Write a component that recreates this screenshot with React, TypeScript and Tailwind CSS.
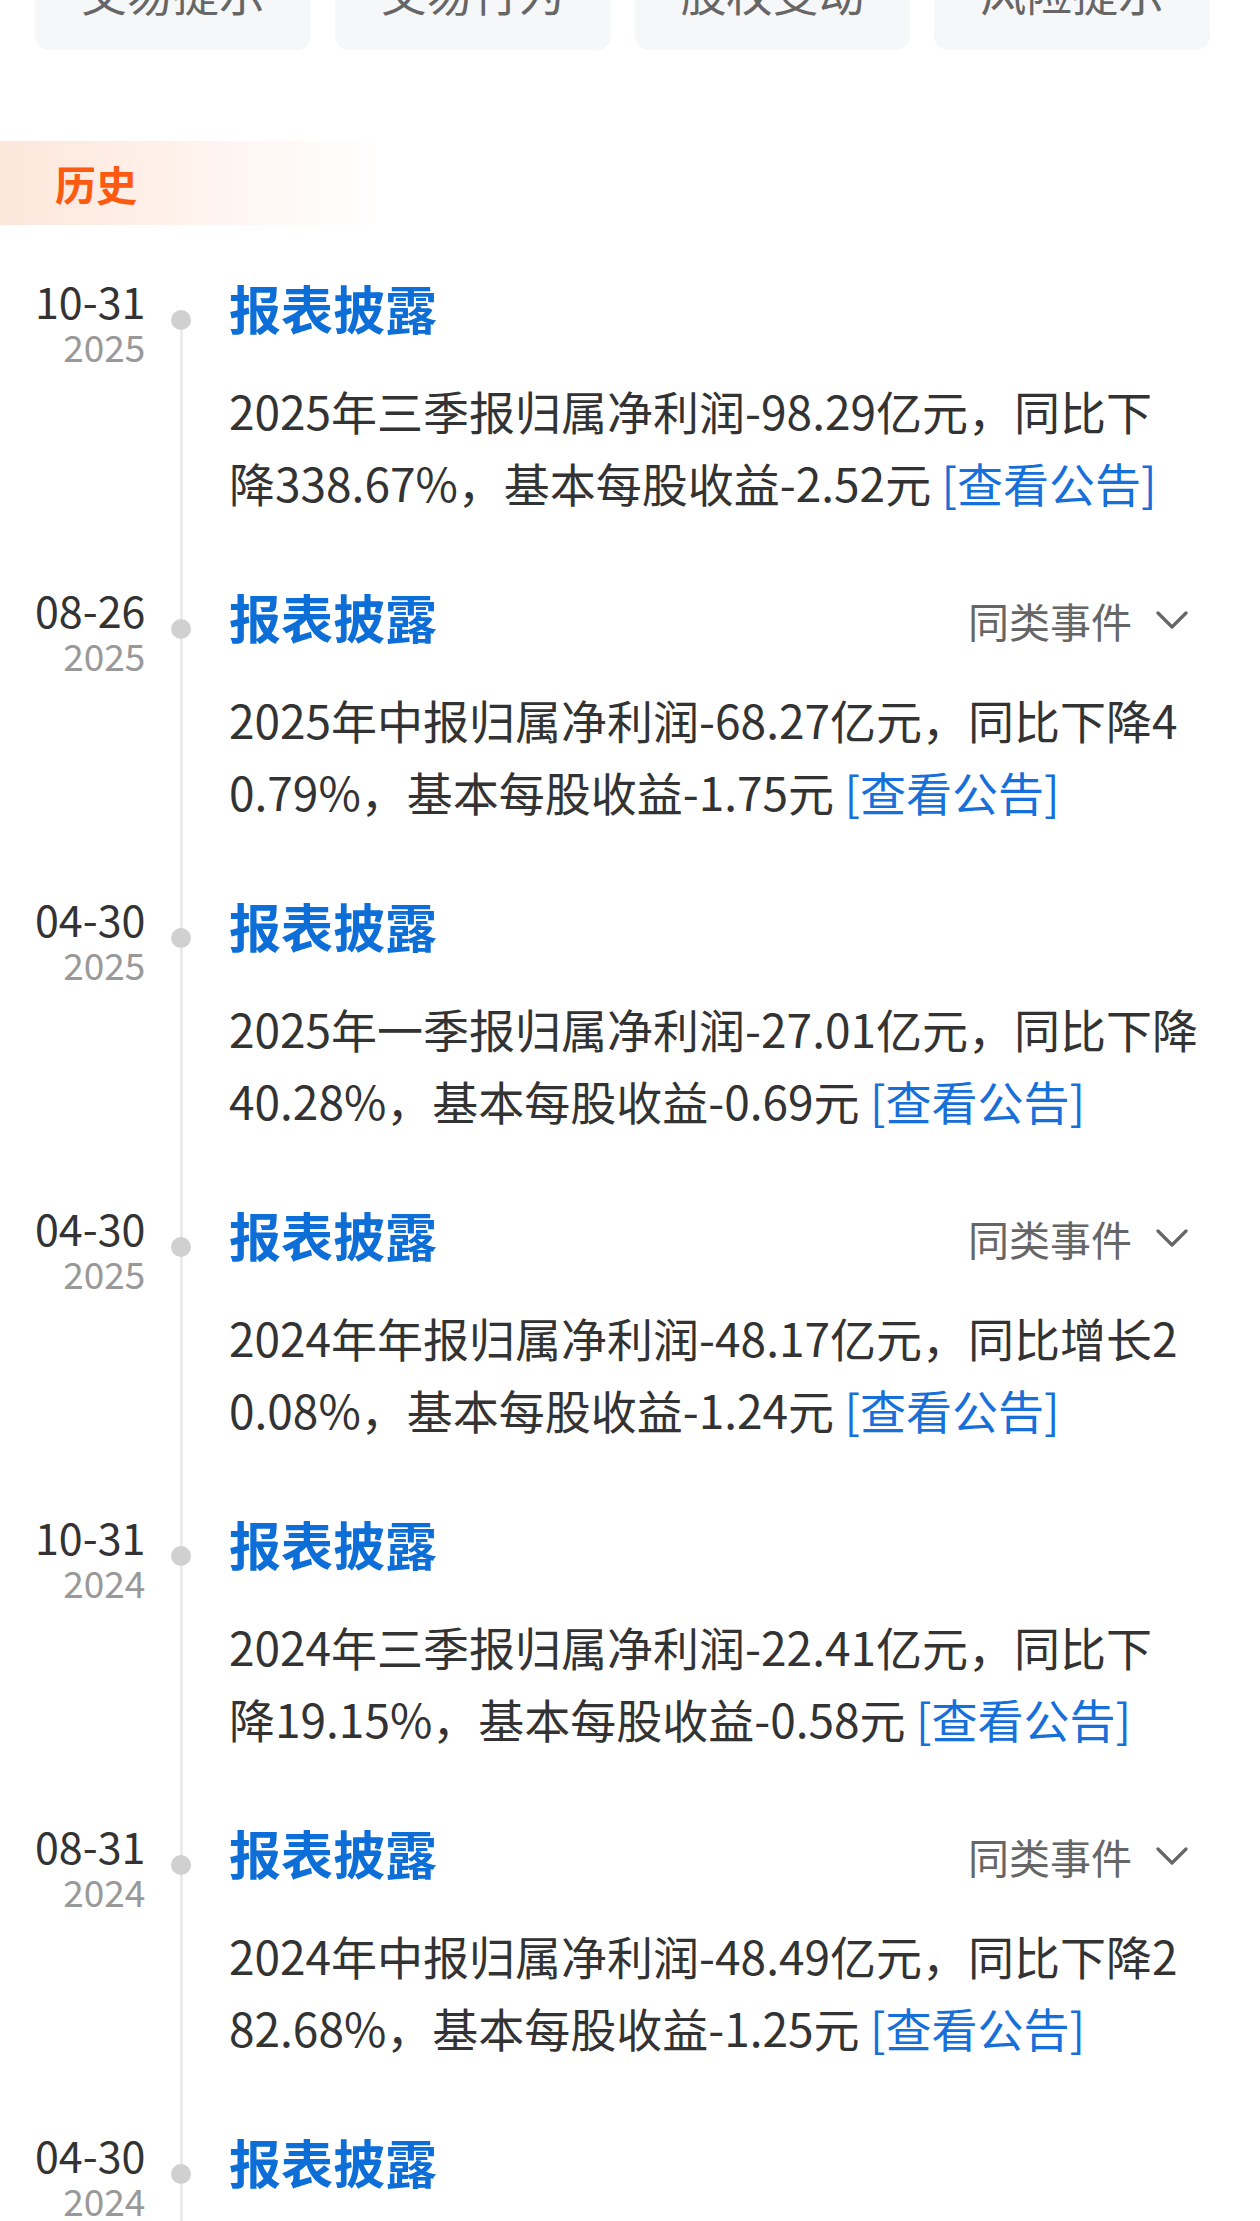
import { Fragment } from "react";

interface EventItem {
  date: string;
  year: string;
  lines: string[];
  similar?: boolean;
}

const tabs = ["交易提示", "交易行为", "股权变动", "风险提示"];

// 每行按原图折行拆开
const events: EventItem[] = [
  {
    date: "10-31",
    year: "2025",
    lines: ["2025年三季报归属净利润-98.29亿元，同比下", "降338.67%，基本每股收益-2.52元"],
  },
  {
    date: "08-26",
    year: "2025",
    similar: true,
    lines: ["2025年中报归属净利润-68.27亿元，同比下降4", "0.79%，基本每股收益-1.75元"],
  },
  {
    date: "04-30",
    year: "2025",
    lines: ["2025年一季报归属净利润-27.01亿元，同比下降", "40.28%，基本每股收益-0.69元"],
  },
  {
    date: "04-30",
    year: "2025",
    similar: true,
    lines: ["2024年年报归属净利润-48.17亿元，同比增长2", "0.08%，基本每股收益-1.24元"],
  },
  {
    date: "10-31",
    year: "2024",
    lines: ["2024年三季报归属净利润-22.41亿元，同比下", "降19.15%，基本每股收益-0.58元"],
  },
  {
    date: "08-31",
    year: "2024",
    similar: true,
    lines: ["2024年中报归属净利润-48.49亿元，同比下降2", "82.68%，基本每股收益-1.25元"],
  },
  {
    date: "04-30",
    year: "2024",
    lines: [],
  },
];

function ChevronDown() {
  return (
    <svg width="32" height="20" viewBox="0 0 32 20" fill="none" className="shrink-0">
      <polyline
        points="2,3 16,17 30,3"
        stroke="#666666"
        strokeWidth="3.2"
        strokeLinecap="round"
        strokeLinejoin="round"
      />
    </svg>
  );
}

function TimelineRow({ item }: { item: EventItem }) {
  return (
    <div className="flex pb-[67px]">
      {/* 日期 + 圆点 */}
      <div className="relative w-[229px] shrink-0 pl-[35px]">
        <div className="flex w-fit flex-col items-end">
          <span className="text-[43px] leading-[48px] text-[#333333]">{item.date}</span>
          <span className="text-[37px] leading-[44px] text-[#999999]">{item.year}</span>
        </div>
        <span className="absolute left-[171px] top-[34px] h-5 w-5 rounded-full bg-[#d0d0d0]" />
      </div>

      <div className="min-w-0 flex-1 pr-[72px]">
        <div className="flex h-[64px] items-start justify-between">
          <h3 className="text-[52px] font-bold leading-[64px] text-[#0e6ed7]">报表披露</h3>
          {item.similar && (
            <div className="flex items-center gap-[24px] text-[41px] leading-[70px] text-[#666666]">
              <span>同类事件</span>
              <ChevronDown />
            </div>
          )}
        </div>
        {item.lines.length > 0 && (
          <p className="mt-[34px] text-[46px] leading-[72px] text-[#333333]">
            {item.lines.map((line, i) => (
              <Fragment key={i}>
                <span className="block whitespace-nowrap">
                  {line}
                  {i === item.lines.length - 1 && (
                    <span className="text-[#1770d9]"> [查看公告]</span>
                  )}
                </span>
              </Fragment>
            ))}
          </p>
        )}
      </div>
    </div>
  );
}

export default function App() {
  return (
    <div className="h-[2221px] w-full overflow-hidden bg-white font-['Noto_Sans_CJK_SC','Noto_Sans',sans-serif]">
      {/* 顶部分类按钮 */}
      <div className="mt-[-62px] grid grid-cols-4 gap-[24px] pl-[35px] pr-[50px]">
        {tabs.map((t) => (
          <div
            key={t}
            className="flex h-[112px] items-center justify-center rounded-[14px] bg-[#f6f7f9] pb-[6px] text-[46px] leading-none text-[#666666]"
          >
            {t}
          </div>
        ))}
      </div>

      {/* 历史 */}
      <div className="mt-[91px] flex h-[84px] w-[384px] items-center bg-linear-to-r from-[#fde6da] to-white pl-[55px]">
        <span className="text-[41px] font-bold leading-none text-[#fb5a10]">历史</span>
      </div>

      <div className="relative mt-[51px]">
        <span className="absolute bottom-0 left-[180px] top-[44px] w-[3px] bg-[#ebebeb]" />
        {events.map((item, i) => (
          <TimelineRow key={i} item={item} />
        ))}
      </div>
    </div>
  );
}
